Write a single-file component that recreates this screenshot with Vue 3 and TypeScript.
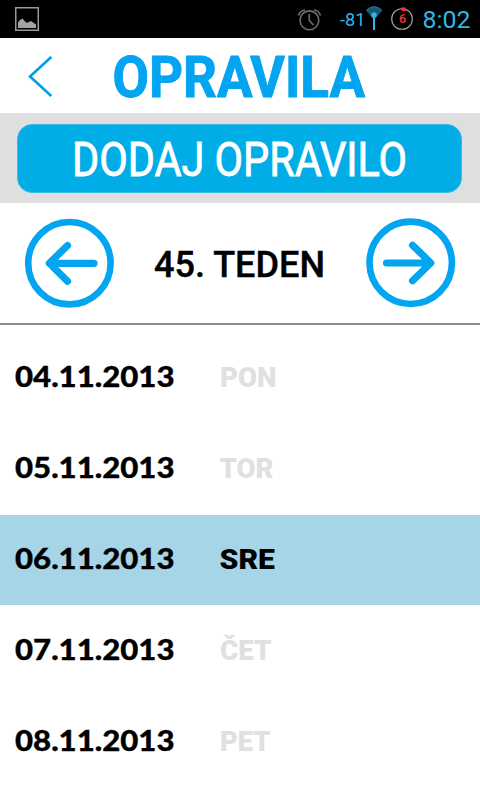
<script setup lang="ts">
interface Day {
  date: string
  name: string
  width: number
  x: number
  active?: boolean
}

const days: Day[] = [
  { date: '04.11.2013', name: 'PON', x: 220, width: 56.5 },
  { date: '05.11.2013', name: 'TOR', x: 219.5, width: 54 },
  { date: '06.11.2013', name: 'SRE', x: 219.5, width: 55.5, active: true },
  { date: '07.11.2013', name: 'ČET', x: 220, width: 51.5 },
  { date: '08.11.2013', name: 'PET', x: 220, width: 50.5 },
]
</script>

<template>
  <main class="screen">
    <svg class="status" viewBox="0 0 480 38">
      <rect x="15.75" y="7.75" width="22.5" height="22.5" fill="none" stroke="#999" stroke-width="1.5" />
      <path d="M18 28V22.5L20 20L22.5 18.5L26 22.5H28L31 21L36 24.5V28Z" fill="#a3a3a3" />
      <g fill="none" stroke="#707070" stroke-width="1.6">
        <circle cx="309.4" cy="20.3" r="9.4" />
        <path d="M309.3 14V20.5L313.5 25M298.5 15.5Q300 11 305 9.8M320.5 15.5Q319 11 314 9.8" />
      </g>
      <text x="340" y="26" class="signal" textLength="25.5" lengthAdjust="spacingAndGlyphs">-81</text>
      <path d="M366 10.5Q374 2.5 382.3 10.5L374 20Z" fill="#155a75" />
      <path d="M366.3 10.3Q374 3 382 10.3" fill="none" stroke="#24799a" />
      <circle cx="374" cy="15" r="2.7" fill="#33b5e5" />
      <path d="M374 15V30" stroke="#33b5e5" stroke-width="2" />
      <circle cx="402" cy="19" r="10.3" fill="none" stroke="#aaa" stroke-width="1.1" />
      <path d="M401.5 7.3L406 7.8L405.3 11.3L401.8 10.8Z" fill="#ff3030" />
      <text x="402.6" y="23.3" class="battery" text-anchor="middle">6</text>
      <text x="422.5" y="28" class="clock" textLength="48" lengthAdjust="spacingAndGlyphs">8:02</text>
    </svg>

    <header class="header">
      <svg viewBox="0 0 480 75">
        <path d="M51.3 19L30 38.5L51.3 58" fill="none" stroke="#009fe3" stroke-width="2.6" />
        <text x="112.5" y="59" class="title" textLength="252.5" lengthAdjust="spacingAndGlyphs">OPRAVILA</text>
      </svg>
    </header>

    <section class="toolbar">
      <button class="add">
        <svg viewBox="0 0 443 67">
          <text x="54" y="50.5" class="add-label" textLength="335" lengthAdjust="spacingAndGlyphs">DODAJ OPRAVILO</text>
        </svg>
      </button>
    </section>

    <section class="week">
      <svg viewBox="0 0 480 120">
        <g fill="none" stroke="#03a4f0" stroke-width="6.6" stroke-linecap="round" stroke-linejoin="round">
          <circle cx="69.4" cy="60.2" r="41.2" />
          <path d="M94 60.3H50M67.5 42.5L49.3 60.3L67.5 78.3" stroke-width="7.2" />
          <circle cx="410.7" cy="59.8" r="41.2" />
          <path d="M386.5 60H430M412.6 42.2L430.8 60L412.6 77.8" stroke-width="7.2" />
        </g>
        <text x="154" y="74" class="week-label" textLength="171" lengthAdjust="spacingAndGlyphs">45. TEDEN</text>
      </svg>
    </section>

    <ul class="days">
      <li v-for="day in days" :key="day.date" class="day" :class="{ active: day.active }">
        <svg viewBox="0 0 480 90">
          <text x="15" y="54.3" class="date" textLength="159.5" lengthAdjust="spacingAndGlyphs">{{ day.date }}</text>
          <text :x="day.x" y="54" class="name" :textLength="day.width" lengthAdjust="spacingAndGlyphs">{{ day.name }}</text>
        </svg>
      </li>
    </ul>
  </main>
</template>

<style>
body {
  background: #fff;
}
</style>

<style scoped>
.screen {
  width: 480px;
  height: 800px;
  overflow: hidden;
  background: #fff;
  font-family: Roboto, "Liberation Sans", sans-serif;
}
svg {
  display: block;
  width: 100%;
  height: 100%;
}
.status {
  height: 38px;
  background: #000;
}
.signal {
  font-size: 18.5px;
  fill: #33b5e5;
}
.battery {
  font-size: 12.5px;
  font-weight: 500;
  fill: #ff3030;
}
.clock {
  font-size: 24.5px;
  fill: #33b5e5;
}
.header {
  height: 75px;
}
.title {
  font-size: 58px;
  font-weight: 700;
  fill: #03a4f0;
  stroke: #03a4f0;
  stroke-width: 1px;
  stroke-linejoin: round;
}
.toolbar {
  box-sizing: border-box;
  height: 90px;
  padding: 11px 18px 10px 17px;
  background: #dfdfdf;
}
.add {
  display: block;
  box-sizing: border-box;
  width: 445px;
  height: 69px;
  padding: 0;
  border: 1px solid #3bbce8;
  border-radius: 15px;
  background: #00ade6;
  font-family: inherit;
}
.add-label {
  font-size: 47.5px;
  fill: #fff;
  stroke: #fff;
  stroke-width: 0.9px;
}
.week {
  height: 120px;
  border-bottom: 2px solid #8e8e8e;
}
.week-label {
  font-size: 36px;
  font-weight: 500;
  fill: #000;
  stroke: #000;
  stroke-width: 0.4px;
}
.days {
  display: grid;
  gap: 1px;
  margin: 0;
  padding: 8px 0 0;
  list-style: none;
}
.day {
  height: 90px;
}
.date,
.name {
  font-size: 27.5px;
  font-weight: 900;
  fill: #000;
}
.date {
  font-family: Lato, sans-serif;
  stroke: #000;
  stroke-width: 0.3px;
}
.name {
  fill: #e0e0e0;
}
.active {
  background: #a6d5e8;
}
.active .name {
  fill: #000;
}
</style>
